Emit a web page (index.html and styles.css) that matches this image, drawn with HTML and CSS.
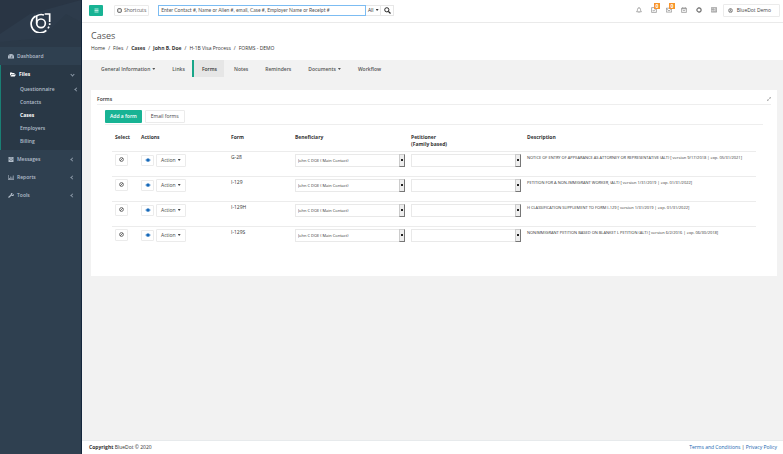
FILE: index.html
```html
<!DOCTYPE html>
<html lang="en">
<head>
<meta charset="utf-8">
<title>Cases - Forms</title>
<link rel="stylesheet" href="styles.css">
</head>
<body>
<svg class="defs" aria-hidden="true">
  <symbol id="ban" viewBox="0 0 10 10"><circle cx="5" cy="5" r="3.8" fill="none" stroke="currentColor" stroke-width="1.5"/><path d="M7.6 2.4 2.4 7.6" stroke="currentColor" stroke-width="1.5"/></symbol>
  <symbol id="eye" viewBox="0 0 12 8"><path d="M0 4Q6-3.5 12 4 6 11.5 0 4Z" fill="#8fb9e0"/><circle cx="6" cy="4" r="3.2" fill="#1668b8"/></symbol>
</svg>
<div class="app">
  <aside class="sidebar">
    <a class="logo" href="#" aria-label="BlueDot">
      <svg class="facets" viewBox="0 0 81 47" preserveAspectRatio="none"><path d="M0 34 30 14 81 0V47H0Z" fill="#2d3b4b"/><path d="M0 42 42 38 66 14 81 22V47H0Z" fill="#2b3948"/></svg>
      <svg class="mark" viewBox="0 0 63 63" fill="none" stroke="#fff"><path d="M44 6H59V30M17 12A27 27 0 1 0 49 55" stroke-width="5"/><circle cx="33" cy="34" r="13" stroke-width="5"/><path d="M20 34V12Q30 5 42 9" stroke-width="5"/><path d="M59 34v5M57 44l-3 5" stroke-width="5"/></svg>
    </a>
    <nav class="menu">
      <a class="item" href="#"><svg viewBox="0 0 12 10"><path d="M0 9V6a6 6 0 0 1 12 0v3Z" fill="currentColor"/><path d="M6 8 8 3M2 6h1M3 3l1 1M9 6h1" stroke="#2f4050" stroke-width="1.200"/></svg>Dashboard</a>
      <div class="group">
        <a class="item strong" href="#"><svg viewBox="0 0 12 10"><path d="M0 8V1h4l1 1h4v2H3ZM1 9l2.500-4H12L9.500 9Z" fill="currentColor"/></svg>Files<i class="chev down"></i></a>
        <a class="sub" href="#">Questionnaire<i class="chev"></i></a>
        <a class="sub" href="#">Contacts</a>
        <a class="sub strong" href="#">Cases</a>
        <a class="sub" href="#">Employers</a>
        <a class="sub" href="#">Billing</a>
      </div>
      <a class="item" href="#"><svg viewBox="0 0 12 10"><path d="M1 0h10v10H1Z" fill="currentColor"/><path d="M1 4 6 7l5-3M3 2h6" fill="none" stroke="#2f4050"/></svg>Messages<i class="chev"></i></a>
      <a class="item" href="#"><svg viewBox="0 0 12 10"><path d="M.5 0v9.500H12M3 9V6M5.500 9V3M8 9V5M10.500 9V1" fill="none" stroke="currentColor" stroke-width="1.400"/></svg>Reports<i class="chev"></i></a>
      <a class="item" href="#"><svg viewBox="0 0 12 10"><path d="m1 9 5-4.500" stroke="currentColor" stroke-width="2.200"/><path d="M10 0 7.500 2l.5 1.500 2 .2L12 2a3.200 3.200 0 0 1-5 3.500A3 3 0 0 1 10 0Z" fill="currentColor"/></svg>Tools<i class="chev"></i></a>
    </nav>
  </aside>

  <div class="page">
    <header class="topbar">
      <button class="toggle" aria-label="Toggle menu"><svg viewBox="0 0 10 10"><path d="M1 2h8M1 5h8M1 8h8" stroke="#c9f2e8" stroke-width="1.800"/></svg></button>
      <button class="btn shortcuts"><svg viewBox="0 0 10 10"><rect x="1.500" y="1.500" width="7" height="7" rx="1" fill="none" stroke="currentColor" stroke-width="2"/></svg>Shortcuts</button>
      <form class="search">
        <input type="text" aria-label="Search" placeholder="Enter Contact #, Name or Alien #, email, Case #, Employer Name or Receipt #">
        <button type="button" class="all">All<i class="caret"></i></button>
        <button type="button" class="go" aria-label="Search"><svg viewBox="0 0 10 10"><circle cx="4" cy="4" r="3" fill="none" stroke="#222" stroke-width="1.400"/><path d="M6.200 6.200 9.300 9.300" stroke="#222" stroke-width="1.800"/></svg></button>
      </form>
      <div class="tools">
        <a href="#" aria-label="Alerts"><svg viewBox="0 0 10 10"><path d="M1 8Q2.500 6.500 2.500 4a2.500 2.500 0 0 1 5 0Q7.500 6.500 9 8ZM5 0v1M4.200 9.500h1.600"/></svg></a>
        <a href="#" aria-label="Tasks"><svg viewBox="0 0 10 10"><path d="M1 1h8v8H1ZM3 5l1.500 2L8 3"/></svg><b class="badge">0</b></a>
        <a href="#" aria-label="Mail"><svg viewBox="0 0 10 10"><path d="M.5 2h9v6.500h-9ZM.5 3 5 6.500 9.500 3"/></svg><b class="badge">0</b></a>
        <a href="#" aria-label="Calendar"><svg viewBox="0 0 10 10"><path d="M1 2h8v7H1ZM1 3h8M3 0v2M7 0v2M3 6h4"/></svg></a>
        <a href="#" aria-label="Help"><svg viewBox="0 0 10 10"><circle cx="5" cy="5" r="3.500" stroke-width="1.800"/><path d="M5 .5v2M5 7.500v2M.5 5h2M7.500 5h2"/></svg></a>
        <a href="#" aria-label="News"><svg viewBox="0 0 10 10"><path d="M.5 1h9v7.500h-9ZM2 3h3v2H2ZM6 3h3M6 5h3M2 7h7"/></svg></a>
      </div>
      <button class="btn user"><svg viewBox="0 0 10 10"><circle cx="5" cy="5" r="4" fill="none" stroke="currentColor"/><circle cx="5" cy="4" r="1.600" fill="none" stroke="currentColor"/><path d="M2 8q3-4 6 0" fill="none" stroke="currentColor"/></svg>BlueDot Demo</button>
    </header>

    <div class="heading">
      <h1>Cases</h1>
      <nav class="crumbs"><a href="#">Home</a><i>/</i><a href="#">Files</a><i>/</i><a href="#" class="strong">Cases</a><i>/</i><a href="#" class="strong">John B. Doe</a><i>/</i><a href="#">H-1B Visa Process</a><i>/</i><span>FORMS - DEMO</span></nav>
    </div>

    <nav class="tabs">
      <a href="#">General Information<i class="caret"></i></a>
      <a href="#">Links</a>
      <a href="#" class="active">Forms</a>
      <a href="#">Notes</a>
      <a href="#">Reminders</a>
      <a href="#">Documents<i class="caret"></i></a>
      <a href="#">Workflow</a>
    </nav>

    <main class="panel">
      <div class="panel-head"><h2>Forms</h2><button class="expand" aria-label="Expand"><svg viewBox="0 0 10 10"><path d="M1 9 9 1M6 1h3v3M1 6v3h3" fill="none" stroke="#888" stroke-width="1.300"/></svg></button></div>
      <div class="actions"><button class="primary">Add a form</button><button class="btn email">Email forms</button></div>
      <table>
        <thead><tr><th class="c-select">Select</th><th class="c-actions">Actions</th><th class="c-form">Form</th><th class="c-person">Beneficiary</th><th class="c-person">Petitioner<br>(Family based)</th><th>Description</th></tr></thead>
        <tbody>
          <tr>
            <td><button class="btn ban" aria-label="Select G-28"><svg><use href="#ban"/></svg></button></td>
            <td><div class="pair"><button class="btn eye" aria-label="View G-28"><svg><use href="#eye"/></svg></button><button class="btn act">Action<i class="caret"></i></button></div></td>
            <td>G-28</td>
            <td><div class="pick"><select aria-label="Beneficiary"><option>John C DOE ( Main Contact)</option></select><i></i></div></td>
            <td><div class="pick"><select aria-label="Petitioner"><option></option></select><i></i></div></td>
            <td class="desc">NOTICE OF ENTRY OF APPEARANCE AS ATTORNEY OR REPRESENTATIVE (ALT) [ version 9/17/2018 | exp. 05/31/2021]</td>
          </tr>
          <tr>
            <td><button class="btn ban" aria-label="Select I-129"><svg><use href="#ban"/></svg></button></td>
            <td><div class="pair"><button class="btn eye" aria-label="View I-129"><svg><use href="#eye"/></svg></button><button class="btn act">Action<i class="caret"></i></button></div></td>
            <td>I-129</td>
            <td><div class="pick"><select aria-label="Beneficiary"><option>John C DOE ( Main Contact)</option></select><i></i></div></td>
            <td><div class="pick"><select aria-label="Petitioner"><option></option></select><i></i></div></td>
            <td class="desc">PETITION FOR A NON-IMMIGRANT WORKER, (ALT) [ version 1/31/2019 | exp. 01/31/2022]</td>
          </tr>
          <tr>
            <td><button class="btn ban" aria-label="Select I-129H"><svg><use href="#ban"/></svg></button></td>
            <td><div class="pair"><button class="btn eye" aria-label="View I-129H"><svg><use href="#eye"/></svg></button><button class="btn act">Action<i class="caret"></i></button></div></td>
            <td>I-129H</td>
            <td><div class="pick"><select aria-label="Beneficiary"><option>John C DOE ( Main Contact)</option></select><i></i></div></td>
            <td><div class="pick"><select aria-label="Petitioner"><option></option></select><i></i></div></td>
            <td class="desc">H CLASSIFICATION SUPPLEMENT TO FORM I-129 [ version 1/31/2019 | exp. 01/31/2022]</td>
          </tr>
          <tr>
            <td><button class="btn ban" aria-label="Select I-129S"><svg><use href="#ban"/></svg></button></td>
            <td><div class="pair"><button class="btn eye" aria-label="View I-129S"><svg><use href="#eye"/></svg></button><button class="btn act">Action<i class="caret"></i></button></div></td>
            <td>I-129S</td>
            <td><div class="pick"><select aria-label="Beneficiary"><option>John C DOE ( Main Contact)</option></select><i></i></div></td>
            <td><div class="pick"><select aria-label="Petitioner"><option></option></select><i></i></div></td>
            <td class="desc">NONIMMIGRANT PETITION BASED ON BLANKET L PETITION (ALT) [ version 6/2/2016 | exp. 06/30/2018]</td>
          </tr>
        </tbody>
      </table>
    </main>

    <footer class="footer"><span><b>Copyright</b> BlueDot © 2020</span><span class="legal"><a href="#">Terms and Conditions</a> | <a href="#">Privacy Policy</a></span></footer>
  </div>
</div>
</body>
</html>
```
FILE: styles.css
```css
* { box-sizing: border-box; }
body { margin: 0; font: 5px/7px "Open Sans", "Noto Sans", sans-serif; color: #333; background: #f2f2f2; }
a { color: inherit; text-decoration: none; }
button, input, select { font: inherit; color: inherit; margin: 0; padding: 0; border-radius: 0; }
button { display: inline-flex; align-items: center; justify-content: center; border: 0; background: none; white-space: nowrap; }
i { font-style: normal; }
h1, h2 { margin: 0; }
svg { display: block; flex: none; }
.defs { position: absolute; width: 0; height: 0; }
.strong { font-weight: 700; }
.app { display: flex; min-height: 100vh; }

.sidebar { width: 82px; flex: none; background: #2f4050; color: #b4bfcb; border-right: 1px solid #14263c; font-weight: 600; }
.logo { position: relative; display: flex; justify-content: center; height: 47px; padding-top: 12px; background: #293544; }
.facets { position: absolute; inset: 0; width: 100%; height: 100%; }
.mark { position: relative; width: 21px; height: 21px; }
.item { display: flex; align-items: center; gap: 3px; height: 18px; padding: 0 7px 0 8px; }
.item svg { width: 6px; height: 5px; }
.group { background: #293846; border-left: 1px solid #1a7f74; padding-bottom: 2px; }
.group .item { padding-left: 9px; }
.group .strong { color: #fff; }
.sub { display: flex; align-items: center; height: 13px; padding: 0 3px 0 19px; }
.chev { width: 3px; height: 3px; margin-left: auto; border: solid #8a97a6; border-width: 0 0 1px 1px; transform: rotate(45deg); }
.chev.down { transform: rotate(-45deg); }

.page { flex: 1; min-width: 0; display: flex; flex-direction: column; }
.topbar { display: flex; align-items: center; height: 23px; padding: 0 3px 2px 7px; background: #fff; border-bottom: 1px solid #eaeaea; }
.btn { border: 1px solid #ebebeb; background: #fff; border-radius: 1px; color: #444; }
.toggle { width: 14px; height: 11px; background: #18b394; border-radius: 1px; }
.toggle svg { width: 5px; height: 5px; }
.shortcuts { height: 11px; margin-left: 11px; padding: 0 2px; gap: 2px; color: #555; }
.shortcuts svg { width: 5px; height: 5px; }
.search { display: flex; margin-left: 9px; height: 11px; }
.search input { width: 208px; border: 1px solid #7cbcf2; padding: 0 2px; outline: 0; font-family: Lato, "Open Sans", sans-serif; }
.search input::placeholder { color: #555; opacity: 1; }
.search button { border: 1px solid #e7e7e7; border-left: 0; }
.all { width: 15px; }
.go { width: 13px; }
.go svg { width: 7px; height: 7px; }
.caret { width: 3px; height: 2px; margin-left: 2px; background: currentColor; clip-path: polygon(0 0, 100% 0, 50% 100%); }
.tools { display: flex; gap: 9px; margin: 0 6px 0 auto; color: #777; }
.tools a { position: relative; }
.tools svg { width: 6px; height: 6px; fill: none; stroke: currentColor; stroke-width: 1; }
.badge { position: absolute; left: 3px; top: -4px; width: 6px; height: 6px; background: #f8952b; color: #fff; line-height: 6px; text-align: center; }
.user { height: 13px; padding: 0 8px 0 4px; gap: 4px; }
.user svg { width: 5px; height: 5px; }

.heading { height: 37px; padding: 6px 9px 0; background: #fff; }
h1 { font-size: 9px; line-height: 13px; font-weight: 400; color: #555; }
.crumbs { display: flex; margin-top: 3px; line-height: 7px; }
.crumbs i { margin: 0 3px; }

.tabs { display: flex; height: 17px; padding-left: 9px; font-weight: 600; color: #555; }
.tabs a { display: flex; align-items: center; padding: 1px 7px 0 8px; border-left: 2px solid transparent; }
.tabs .active { background: #e6e6e6; border-color: #18a689; color: #333; }

.panel { margin: 13px 6px 0 9px; padding: 4px 6px 25px; background: #fff; }
.panel-head { display: flex; align-items: center; justify-content: space-between; height: 11px; border-bottom: 1px solid #eee; }
h2 { font-size: 5px; line-height: 7px; font-weight: 600; }
.expand svg { width: 4px; height: 4px; }
.actions { display: flex; gap: 3px; margin: 5px 8px 0; padding-bottom: 1px; border-bottom: 1px solid #eee; }
.primary { height: 13px; padding: 0 5px; background: #18b394; color: #fff; font-weight: 600; border-radius: 1px; }
.email { padding: 0 5px; }
table { width: calc(100% - 30px); margin-left: 15px; border-collapse: collapse; table-layout: fixed; }
th { height: 26px; padding: 9px 3px 0; text-align: left; vertical-align: top; font-weight: 700; }
td { height: 25px; padding: 2px 3px 0; border-top: 1px solid #ececec; vertical-align: top; white-space: nowrap; }
.c-select { width: 26px; }
.c-actions { width: 90px; }
.c-form { width: 64px; }
.c-person { width: 116px; }
.desc { font-size: 4px; }
.ban { width: 13px; height: 12px; }
.ban svg { width: 5px; height: 5px; }
.pair { display: flex; align-items: center; gap: 2px; }
.eye { width: 13px; height: 11px; }
.eye svg { width: 6px; height: 4px; }
.act { height: 13px; padding: 0 4px; }
.pick { position: relative; height: 13px; }
.pick select { display: block; appearance: none; width: 100%; height: 100%; padding: 0 8px 0 2px; border: 1px solid #e9e9e9; background: #fff; font-size: 4px; }
.pick i { position: absolute; right: 0; top: 0; bottom: 0; width: 6px; display: grid; place-items: center; background: #eee; border: 1px solid #ccc; border-right-color: #777; border-bottom-color: #777; pointer-events: none; }
.pick i::after { content: ""; width: 2px; height: 2px; background: #222; }

.footer { display: flex; align-items: center; justify-content: space-between; height: 14px; margin-top: auto; padding: 0 6px 0 7px; background: #fff; border-top: 1px solid #e7eaec; }
.legal a { color: #1565b0; font-weight: 500; }
```
